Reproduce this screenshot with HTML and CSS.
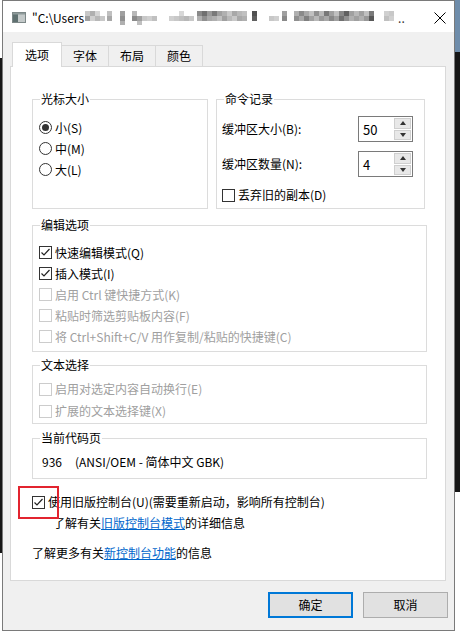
FILE: index.html
```html
<!DOCTYPE html>
<html lang="zh-CN">
<head>
<meta charset="utf-8">
<title>属性</title>
<link rel="stylesheet" href="styles.css">
</head>
<body>
<div class="win">
  <div class="titlebar">
    <svg class="appicon" width="14" height="11" viewBox="0 0 14 11">
      <rect x="0.5" y="0.5" width="13" height="10" fill="#c3c9c9" stroke="#7d8888"/>
      <rect x="1" y="1" width="5" height="9" fill="#5f7070"/>
      <rect x="1" y="1" width="12" height="1.5" fill="#8e9a9a"/>
    </svg>
    <span class="title">"C:\Users</span>
    <svg class="blur" width="324" height="14" viewBox="0 0 324 14">
      <g>
        <rect x="7" y="0" width="5" height="5" fill="#c8c8c8"/><rect x="7" y="5" width="5" height="5" fill="#a0a0a0"/>
        <rect x="12" y="0" width="5" height="5" fill="#b0b0b0"/><rect x="12" y="5" width="5" height="5" fill="#d0d0d0"/>
        <rect x="17" y="0" width="5" height="5" fill="#d5d5d5"/><rect x="17" y="5" width="5" height="5" fill="#b8b8b8"/>
        <rect x="22" y="5" width="5" height="5" fill="#c8c8c8"/>
        <rect x="29" y="0" width="5" height="5" fill="#c0c0c0"/><rect x="29" y="5" width="5" height="5" fill="#a8a8a8"/>
        <rect x="42" y="0" width="5" height="5" fill="#a0a0a0"/><rect x="42" y="5" width="5" height="5" fill="#909090"/><rect x="42" y="10" width="5" height="4" fill="#b0b0b0"/>
        <rect x="54" y="0" width="5" height="5" fill="#b8b8b8"/><rect x="54" y="5" width="5" height="5" fill="#8a8a8a"/>
        <rect x="59" y="5" width="5" height="5" fill="#a0a0a0"/><rect x="59" y="10" width="5" height="4" fill="#c0c0c0"/>
        <rect x="64" y="5" width="5" height="5" fill="#c8c8c8"/>
        <rect x="69" y="5" width="5" height="5" fill="#d0d0d0"/>
        <rect x="74" y="5" width="5" height="5" fill="#c0c0c0"/>
        <rect x="91" y="5" width="5" height="5" fill="#d0d0d0"/>
        <rect x="96" y="5" width="5" height="5" fill="#c8c8c8"/>
        <rect x="101" y="0" width="5" height="5" fill="#d8d8d8"/><rect x="101" y="5" width="5" height="5" fill="#c0c0c0"/>
        <rect x="106" y="5" width="5" height="5" fill="#b8b8b8"/>
        <rect x="111" y="5" width="5" height="5" fill="#c8c8c8"/>
        <rect x="119" y="0" width="5" height="5" fill="#8a8a8a"/><rect x="119" y="5" width="5" height="5" fill="#b0b0b0"/>
        <rect x="124" y="0" width="5" height="5" fill="#707070"/><rect x="124" y="5" width="5" height="5" fill="#909090"/>
        <rect x="129" y="0" width="5" height="5" fill="#9a9a9a"/><rect x="129" y="5" width="5" height="5" fill="#a8a8a8"/>
        <rect x="134" y="0" width="5" height="5" fill="#7a7a7a"/><rect x="134" y="5" width="5" height="5" fill="#b0b0b0"/>
        <rect x="139" y="0" width="5" height="5" fill="#a0a0a0"/><rect x="139" y="5" width="5" height="5" fill="#c0c0c0"/>
        <rect x="144" y="0" width="5" height="5" fill="#b0b0b0"/><rect x="144" y="5" width="5" height="5" fill="#a0a0a0"/>
        <rect x="149" y="0" width="5" height="5" fill="#c8c8c8"/><rect x="149" y="5" width="5" height="5" fill="#b8b8b8"/>
        <rect x="154" y="0" width="5" height="5" fill="#a8a8a8"/><rect x="154" y="5" width="5" height="5" fill="#c8c8c8"/>
        <rect x="159" y="0" width="5" height="5" fill="#b8b8b8"/><rect x="159" y="5" width="5" height="5" fill="#a8a8a8"/>
        <rect x="164" y="0" width="5" height="5" fill="#c0c0c0"/><rect x="164" y="5" width="5" height="5" fill="#b0b0b0"/>
        <rect x="174" y="0" width="5" height="5" fill="#505050"/><rect x="174" y="5" width="5" height="5" fill="#606060"/>
        <rect x="191" y="5" width="5" height="5" fill="#c8c8c8"/>
        <rect x="196" y="5" width="5" height="5" fill="#d0d0d0"/>
        <rect x="204" y="0" width="5" height="5" fill="#a0a0a0"/><rect x="204" y="5" width="5" height="5" fill="#8a8a8a"/>
        <rect x="216" y="0" width="5" height="5" fill="#b0b0b0"/><rect x="216" y="5" width="5" height="5" fill="#909090"/>
        <rect x="221" y="0" width="5" height="5" fill="#8a8a8a"/><rect x="221" y="5" width="5" height="5" fill="#a8a8a8"/>
        <rect x="226" y="0" width="5" height="5" fill="#a8a8a8"/><rect x="226" y="5" width="5" height="5" fill="#808080"/>
        <rect x="231" y="0" width="5" height="5" fill="#c0c0c0"/><rect x="231" y="5" width="5" height="5" fill="#a0a0a0"/>
        <rect x="236" y="0" width="5" height="5" fill="#909090"/><rect x="236" y="5" width="5" height="5" fill="#b8b8b8"/>
        <rect x="241" y="0" width="5" height="5" fill="#b8b8b8"/><rect x="241" y="5" width="5" height="5" fill="#989898"/>
        <rect x="246" y="0" width="5" height="5" fill="#787878"/><rect x="246" y="5" width="5" height="5" fill="#a8a8a8"/>
        <rect x="251" y="0" width="5" height="5" fill="#a0a0a0"/><rect x="251" y="5" width="5" height="5" fill="#888888"/>
        <rect x="256" y="0" width="5" height="5" fill="#c0c0c0"/><rect x="256" y="5" width="5" height="5" fill="#a0a0a0"/>
        <rect x="261" y="0" width="5" height="5" fill="#888888"/><rect x="261" y="5" width="5" height="5" fill="#707070"/>
        <rect x="266" y="0" width="5" height="5" fill="#606060"/><rect x="266" y="5" width="5" height="5" fill="#909090"/>
        <rect x="271" y="0" width="5" height="5" fill="#a0a0a0"/><rect x="271" y="5" width="5" height="5" fill="#b0b0b0"/>
        <rect x="276" y="0" width="5" height="5" fill="#b8b8b8"/><rect x="276" y="5" width="5" height="5" fill="#a0a0a0"/>
        <rect x="281" y="0" width="5" height="5" fill="#a0a0a0"/><rect x="281" y="5" width="5" height="5" fill="#b0b0b0"/>
        <rect x="286" y="0" width="5" height="5" fill="#c0c0c0"/><rect x="286" y="5" width="5" height="5" fill="#989898"/>
        <rect x="291" y="0" width="5" height="5" fill="#7a7a7a"/><rect x="291" y="5" width="5" height="5" fill="#585858"/>
        <rect x="306" y="0" width="5" height="5" fill="#d0d0d0"/><rect x="306" y="5" width="5" height="5" fill="#c0c0c0"/>
        <rect x="311" y="0" width="5" height="5" fill="#c8c8c8"/><rect x="311" y="5" width="5" height="5" fill="#d0d0d0"/>
      </g>
    </svg>
    <span class="ell">..</span>
    <svg class="close" width="12" height="12" viewBox="0 0 12 12">
      <path d="M0.5 0.5 L11.5 11.5 M11.5 0.5 L0.5 11.5" stroke="#000" stroke-width="1" fill="none"/>
    </svg>
  </div>

  <div class="client">
    <div class="tabs">
      <div class="tab tab-active">选项</div>
      <div class="tab">字体</div>
      <div class="tab">布局</div>
      <div class="tab">颜色</div>
    </div>

    <div class="panel">
      <div class="row-top">
        <fieldset class="grp grp-cursor">
          <legend>光标大小</legend>
          <div class="grp-body cursor-body">
            <div class="opt opt-radio"><span class="radio radio-on"></span>小(S)</div>
            <div class="opt opt-radio"><span class="radio"></span>中(M)</div>
            <div class="opt opt-radio"><span class="radio"></span>大(L)</div>
          </div>
        </fieldset>
        <fieldset class="grp grp-history">
          <legend>命令记录</legend>
          <div class="grp-body history-body">
            <div class="spin-row">
              <span class="spin-label">缓冲区大小(B):</span>
              <div class="spin">
                <span class="spin-val">50</span>
                <div class="spin-btns">
                  <span class="sb"><span class="arr-up"></span></span>
                  <span class="sb"><span class="arr-down"></span></span>
                </div>
              </div>
            </div>
            <div class="spin-row spin-row-2">
              <span class="spin-label">缓冲区数量(N):</span>
              <div class="spin">
                <span class="spin-val">4</span>
                <div class="spin-btns">
                  <span class="sb"><span class="arr-up"></span></span>
                  <span class="sb"><span class="arr-down"></span></span>
                </div>
              </div>
            </div>
            <div class="opt opt-discard"><span class="cb"></span>丢弃旧的副本(D)</div>
          </div>
        </fieldset>
      </div>

      <fieldset class="grp grp-edit">
        <legend>编辑选项</legend>
        <div class="grp-body edit-body">
          <div class="opt"><span class="cb cb-on"><svg width="11" height="11" viewBox="0 0 11 11"><path d="M1.5 5.5 L4 8 L9.5 2" stroke="#222" stroke-width="1.2" fill="none"/></svg></span>快速编辑模式(Q)</div>
          <div class="opt"><span class="cb cb-on"><svg width="11" height="11" viewBox="0 0 11 11"><path d="M1.5 5.5 L4 8 L9.5 2" stroke="#222" stroke-width="1.2" fill="none"/></svg></span>插入模式(I)</div>
          <div class="opt opt-dis"><span class="cb cb-dis"></span>启用 Ctrl 键快捷方式(K)</div>
          <div class="opt opt-dis"><span class="cb cb-dis"></span>粘贴时筛选剪贴板内容(F)</div>
          <div class="opt opt-dis"><span class="cb cb-dis"></span>将 Ctrl+Shift+C/V 用作复制/粘贴的快捷键(C)</div>
        </div>
      </fieldset>

      <fieldset class="grp grp-select">
        <legend>文本选择</legend>
        <div class="grp-body select-body">
          <div class="opt opt-tall opt-dis"><span class="cb cb-dis"></span>启用对选定内容自动换行(E)</div>
          <div class="opt opt-tall opt-dis"><span class="cb cb-dis"></span>扩展的文本选择键(X)</div>
        </div>
      </fieldset>

      <fieldset class="grp grp-code">
        <legend>当前代码页</legend>
        <div class="grp-body code-body">
          <div class="code-line"><span class="cp-num">936</span>(ANSI/OEM - 简体中文 GBK)</div>
        </div>
      </fieldset>

      <div class="opt legacy"><span class="cb cb-on"><svg width="11" height="11" viewBox="0 0 11 11"><path d="M1.5 5.5 L4 8 L9.5 2" stroke="#222" stroke-width="1.2" fill="none"/></svg></span>使用旧版控制台(U)(需要重新启动，影响所有控制台)<span class="mark"></span></div>
      <div class="info info-legacy">了解有关<a class="link" href="#">旧版控制台模式</a>的详细信息</div>
      <div class="info info-new">了解更多有关<a class="link" href="#">新控制台功能</a>的信息</div>
    </div>

    <div class="buttons">
      <div class="btn btn-default">确定</div>
      <div class="btn">取消</div>
    </div>
  </div>
</div>
</body>
</html>
```

FILE: styles.css
```css
* { box-sizing: border-box; }

html, body {
  margin: 0;
  padding: 0;
}

body {
  width: 460px;
  height: 636px;
  overflow: hidden;
  font-family: "Noto Sans CJK SC", "Noto Sans", sans-serif;
  font-size: 12px;
  color: #000;
  background:
    linear-gradient(#6f8dab, #6f8dab) 455px 0 / 5px 52px no-repeat,
    linear-gradient(#161616, #161616) 455px 52px / 5px 440px no-repeat,
    linear-gradient(#161616, #161616) 0 58px / 2px 495px no-repeat,
    #ffffff;
}

.win {
  margin-left: 2px;
  width: 453px;
  height: 631px;
  border: 1px solid #7a7a7a;
  background: #f0f0f0;
  display: flex;
  flex-direction: column;
}

/* ---------- title bar ---------- */
.titlebar {
  height: 31px;
  flex: none;
  background: #ffffff;
  display: flex;
  align-items: center;
  padding: 2px 0 0 9px;
}

.appicon { flex: none; }

.title {
  margin-left: 6px;
  font-size: 12px;
  line-height: 16px;
  white-space: pre;
}

.blur {
  flex: none;
  margin-left: -6px;
  margin-top: 1px;
}

.ell {
  margin-left: -4px;
  font-size: 12px;
  color: #333;
}

.close {
  margin-left: auto;
  margin-right: 8px;
  flex: none;
}

/* ---------- client ---------- */
.client {
  flex: 1;
  padding: 10px 0 0 7px;
}

.tabs {
  display: flex;
  align-items: flex-end;
  height: 24px;
  margin-left: 2px;
}

.tab {
  height: 21px;
  padding: 0 11px;
  border: 1px solid #d9d9d9;
  border-left: none;
  border-bottom: none;
  background: #f0f0f0;
  display: flex;
  align-items: center;
  justify-content: center;
  line-height: 16px;
}

.tab-active {
  height: 25px;
  margin-bottom: -1px;
  padding: 0 12px;
  border-left: 1px solid #d9d9d9;
  background: #ffffff;
  position: relative;
  z-index: 1;
}

.panel {
  width: 436px;
  height: 515px;
  border: 1px solid #d9d9d9;
  background: #ffffff;
  padding: 24px 18px 0 21px;
}

/* ---------- group boxes ---------- */
.grp {
  margin: 0;
  padding: 0;
  border: 1px solid #dcdcdc;
  min-width: 0;
}

.grp legend {
  margin-left: 7px;
  padding: 0 1px;
  font-size: 12px;
  line-height: 16px;
}

.row-top {
  display: flex;
  gap: 8px;
  align-items: stretch;
}

.grp-cursor { width: 176px; }
.grp-history { width: 209px; }

.cursor-body {
  padding: 10px 0 0 6px;
  display: flex;
  flex-direction: column;
}

.history-body {
  padding: 9px 11px 3px 5px;
  display: flex;
  flex-direction: column;
}

.grp-edit { margin-top: 8px; }
.edit-body { padding: 9px 0 4px 6px; }

.grp-select { margin-top: 5px; }
.select-body { padding: 5px 0 1px 6px; }

.grp-code { margin-top: 6px; }
.code-body { padding: 8px 0 8px 9px; }

.code-line {
  height: 16px;
  line-height: 16px;
  white-space: nowrap;
  display: flex;
}

.cp-num { margin-right: 13px; }

/* ---------- options ---------- */
.opt {
  height: 21px;
  display: flex;
  align-items: center;
  line-height: 16px;
  white-space: nowrap;
}

.opt-tall { height: 22px; }

.opt-dis { color: #a0a0a0; }

.cb {
  width: 13px;
  height: 13px;
  flex: none;
  border: 1px solid #333333;
  background: #ffffff;
  margin-right: 3px;
  display: flex;
  align-items: center;
  justify-content: center;
}

.cb-dis { border-color: #cccccc; }

.radio {
  width: 13px;
  height: 13px;
  flex: none;
  border: 1px solid #333333;
  border-radius: 50%;
  background: #ffffff;
  margin-right: 3px;
  display: flex;
  align-items: center;
  justify-content: center;
}

.radio-on::after {
  content: "";
  width: 7px;
  height: 7px;
  border-radius: 50%;
  background: #333333;
}

/* ---------- spinners ---------- */
.spin-row {
  height: 26px;
  display: flex;
  align-items: center;
}

.spin-row-2 { margin-top: 9px; }

.spin-label {
  flex: 1;
  line-height: 16px;
  white-space: nowrap;
}

.spin {
  width: 55px;
  height: 26px;
  flex: none;
  border: 1px solid #7a7a7a;
  background: #ffffff;
  display: flex;
  align-items: stretch;
}

.spin-val {
  padding-left: 4px;
  display: flex;
  align-items: center;
  font-size: 13px;
}

.spin-btns {
  margin: 1px 1px 1px auto;
  width: 17px;
  display: flex;
  flex-direction: column;
  gap: 1px;
}

.sb {
  flex: 1;
  background: #e8e8e8;
  border: 1px solid #cfcfcf;
  display: flex;
  align-items: center;
  justify-content: center;
}

.arr-up {
  width: 0;
  height: 0;
  border-left: 3px solid transparent;
  border-right: 3px solid transparent;
  border-bottom: 4px solid #333333;
}

.arr-down {
  width: 0;
  height: 0;
  border-left: 3px solid transparent;
  border-right: 3px solid transparent;
  border-top: 4px solid #333333;
}

.opt-discard {
  height: 20px;
  margin-top: 8px;
}

/* ---------- legacy & info ---------- */
.legacy {
  height: 20px;
  margin-top: 13px;
  position: relative;
}

.mark {
  position: absolute;
  left: -14px;
  top: -6px;
  width: 41px;
  height: 33px;
  border: 2px solid #e2242f;
}

.info {
  height: 20px;
  display: flex;
  align-items: center;
  line-height: 16px;
  white-space: nowrap;
}

.info-legacy {
  margin-top: 1px;
  padding-left: 21px;
}

.info-new { margin-top: 10px; }

.link {
  color: #0066cc;
  text-decoration: underline;
}

/* ---------- buttons ---------- */
.buttons {
  margin-top: 11px;
  padding-right: 6px;
  display: flex;
  justify-content: flex-end;
  gap: 10px;
}

.btn {
  width: 85px;
  height: 26px;
  border: 1px solid #adadad;
  background: #e1e1e1;
  display: flex;
  align-items: center;
  justify-content: center;
  line-height: 16px;
}

.btn-default {
  border: 2px solid #0078d7;
}
```
